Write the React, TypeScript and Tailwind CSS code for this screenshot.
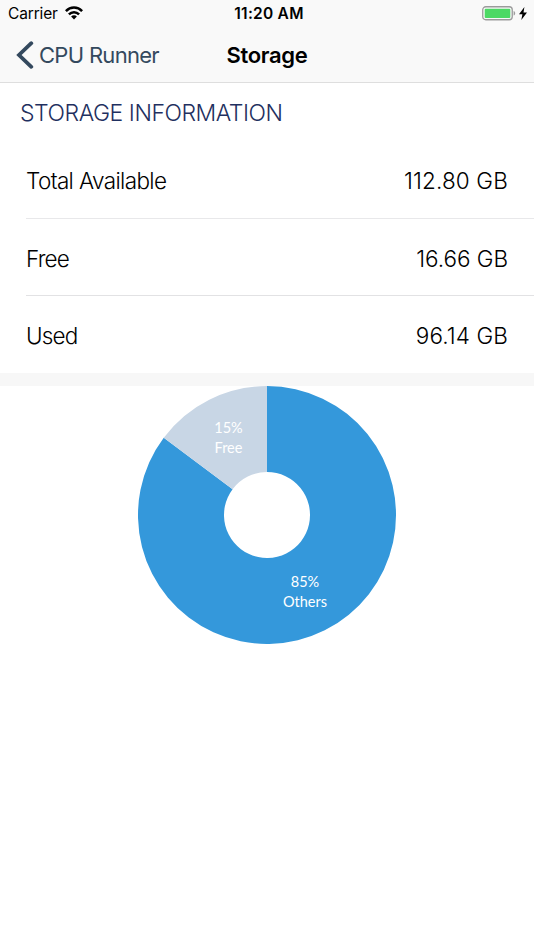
import React from "react";

const TOTAL_GB = 112.8;
const FREE_GB = 16.66;

const rows = [
  { label: "Total Available", value: "112.80 GB", rowClass: "h-[78px] pt-[3px] border-b border-[#e8e8ea]", labelClass: "tracking-[-0.62px]", valueClass: "tracking-[0.15px]" },
  { label: "Free", value: "16.66 GB", rowClass: "h-[77px] pt-[3px] border-b border-[#e2e2e4]", labelClass: "tracking-[-0.8px]", valueClass: "tracking-[-0.05px]" },
  { label: "Used", value: "96.14 GB", rowClass: "h-[77px] pt-[3px]", labelClass: "tracking-[-0.8px]", valueClass: "tracking-[0.1px]" }
];

function StatusBar() {
  return (
    <div className="grid grid-cols-3 items-center h-7 pl-2 pr-[7px] text-black">
      <div className="flex items-center gap-[7px]">
        <span className="text-[15.5px] leading-7 tracking-[-0.15px]">Carrier</span>
        <svg width="18" height="14" viewBox="0 0 18 14" fill="none" stroke="#000" strokeWidth="2.5" className="mb-[2px]">
          <path d="M0.9 5.1C5.4 0.4 12.6 0.4 17.1 5.1" />
          <path d="M3.9 8.3C6.8 5.4 11.2 5.4 14.1 8.3" />
          <path d="M9 13.4L6.1 10.4C7.7 8.9 10.3 8.9 11.9 10.4Z" fill="#000" stroke="none" />
        </svg>
      </div>
      <span className="pl-[3px] text-center text-[15.5px] leading-7 font-semibold tracking-[0.25px]">11:20 AM</span>
      <div className="flex items-center justify-end gap-[3px] pb-px">
        <svg width="34" height="15" viewBox="0 0 34 15">
          <rect x="0.75" y="0.75" width="29.5" height="13" rx="3" fill="none" stroke="#9b9b9b" strokeWidth="1.3" />
          <rect x="2.7" y="2.7" width="25.6" height="9.2" rx="1" fill="#4cd964" />
          <path d="M31.6 5C33.7 5.6 33.7 9 31.6 9.6Z" fill="#9b9b9b" />
        </svg>
        <svg width="8" height="13" viewBox="0 0 8 13">
          <path d="M5.4 0L0 7.3H3.4L2.3 13L8 5.4H4.5Z" fill="#000" />
        </svg>
      </div>
    </div>
  );
}

function NavBar() {
  return (
    <div className="grid grid-cols-3 items-center h-[54px] px-4">
      <button className="flex items-center gap-[5px] text-[#34495e] whitespace-nowrap">
        <svg width="18" height="28" viewBox="0 0 18 28" fill="none">
          <path d="M15.3 2.2L3 14L15.3 25.8" stroke="currentColor" strokeWidth="3.8" strokeLinecap="round" />
        </svg>
        <span className="text-[22px] leading-7 tracking-[-0.7px]">CPU Runner</span>
      </button>
      <h1 className="text-center text-[22px] leading-7 font-semibold tracking-[-0.3px] text-black">Storage</h1>
    </div>
  );
}

const CENTER = 129;
const OUTER = 129;
const INNER = 43;

// Ring segment between two angles, measured clockwise from twelve o'clock
function segment(from: number, to: number) {
  const point = (r: number, a: number) => `${CENTER + r * Math.sin(a)} ${CENTER - r * Math.cos(a)}`;
  const large = to - from > Math.PI ? 1 : 0;
  return [
    `M${point(OUTER, from)}`,
    `A${OUTER} ${OUTER} 0 ${large} 1 ${point(OUTER, to)}`,
    `L${point(INNER, to)}`,
    `A${INNER} ${INNER} 0 ${large} 0 ${point(INNER, from)}Z`
  ].join(" ");
}

function StorageChart() {
  const full = 2 * Math.PI;
  const split = (1 - FREE_GB / TOTAL_GB) * full;

  return (
    <svg width="258" height="258" viewBox="0 0 258 258" className="font-[Lato,sans-serif] text-[14.5px]" textAnchor="middle">
      <path d={segment(0, split)} fill="#3498db" />
      <path d={segment(split, full)} fill="#c8d6e5" />
      <text x="90.5" y="47" fill="#fff">15%</text>
      <text x="90.5" y="67" fill="#fff">Free</text>
      <text x="167" y="201" fill="#fff">85%</text>
      <text x="167" y="220.5" fill="#fff">Others</text>
    </svg>
  );
}

export default function App() {
  return (
    <div className="min-h-[950px] bg-white font-[Inter,sans-serif]">
      <header className="bg-[#f9f9f9] border-b border-[#dedede]">
        <StatusBar />
        <NavBar />
      </header>

      <section>
        <h2 className="h-[58px] pt-px pl-5 text-[23px] leading-[58px] font-light tracking-[-0.47px] text-[#1f3060]">
          STORAGE INFORMATION
        </h2>
        <div className="pl-[26px]">
          {rows.map((row) => (
            <div
              key={row.label}
              className={`flex items-center justify-between pr-[26px] text-[22.5px] font-light text-black ${row.rowClass}`}
            >
              <span className={row.labelClass}>{row.label}</span>
              <span className={row.valueClass}>{row.value}</span>
            </div>
          ))}
        </div>
      </section>

      <div className="h-[13px] bg-[#f7f7f7]" />
      <div className="flex justify-center">
        <StorageChart />
      </div>
    </div>
  );
}
